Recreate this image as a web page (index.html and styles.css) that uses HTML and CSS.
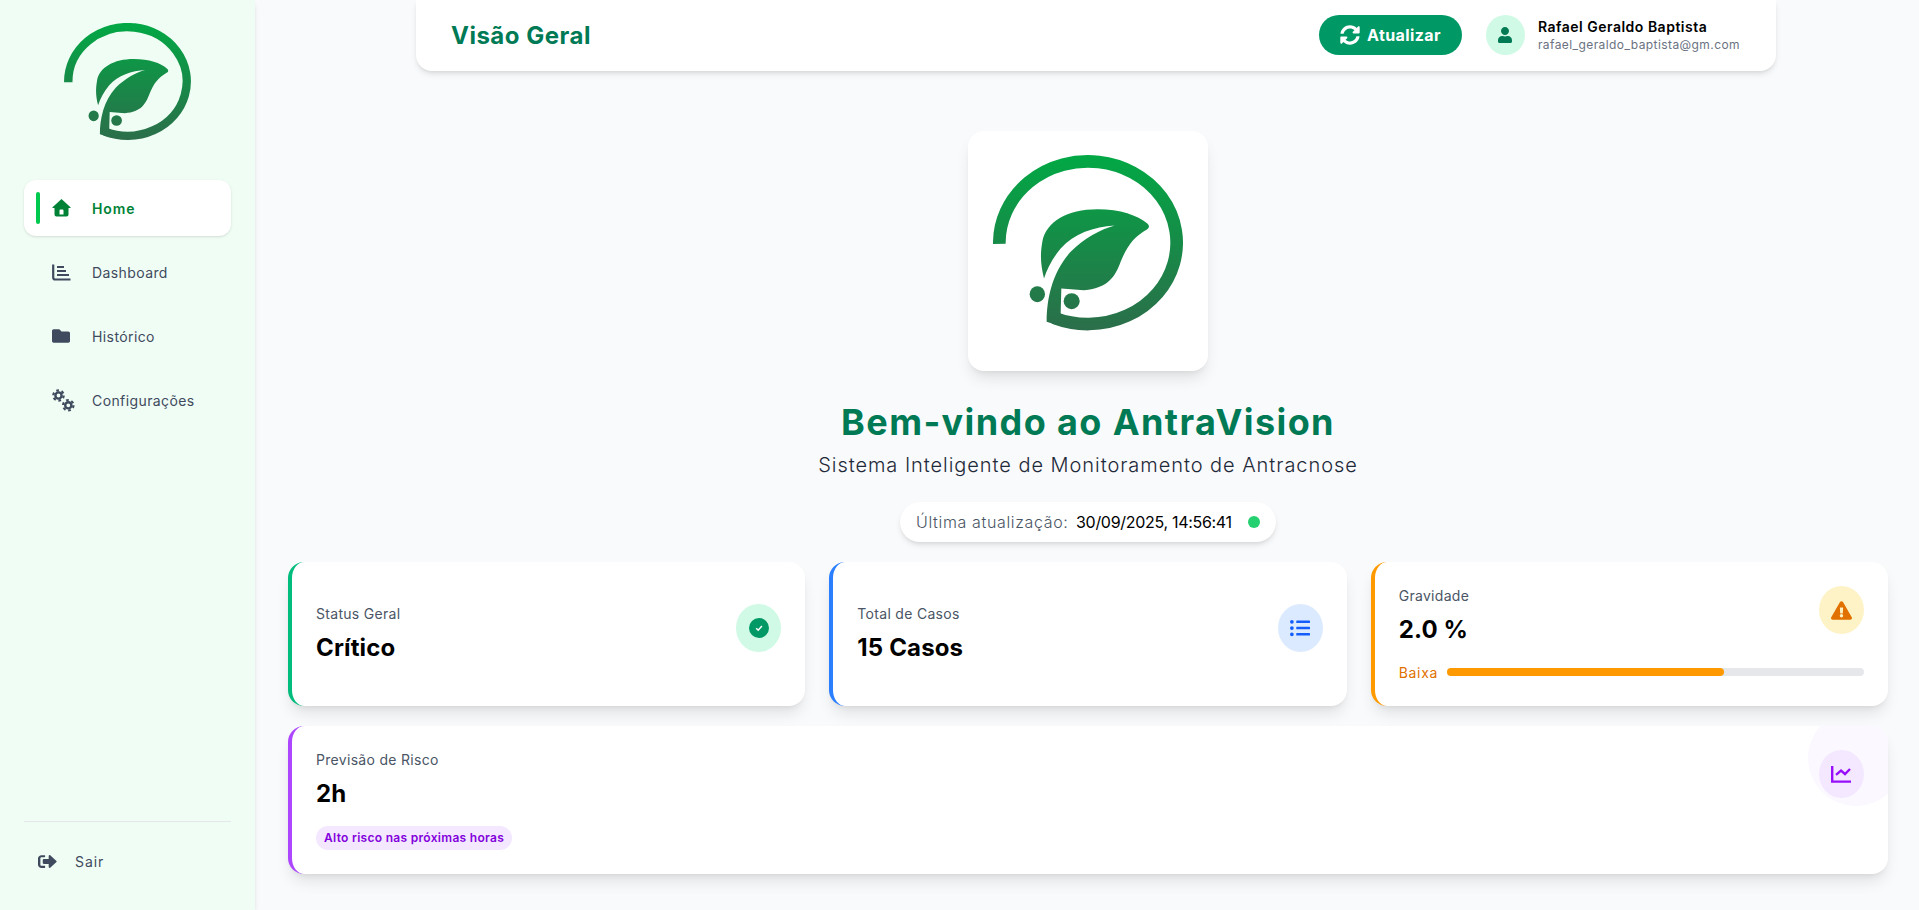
FILE: index.html
```html
<!DOCTYPE html>
<html lang="pt-BR">
<head>
  <meta charset="UTF-8" />
  <title>AntraVision - Visão Geral</title>
  <link rel="stylesheet" href="styles.css">
</head>
<body>
  <aside class="sidebar">
    <svg class="logo-side" viewBox="97 90 570 575" xmlns="http://www.w3.org/2000/svg" aria-label="AntraVision">
      <defs>
        <linearGradient id="logoGradA" gradientUnits="userSpaceOnUse" x1="0" y1="90" x2="0" y2="617">
          <stop offset="0%" stop-color="#02a845" />
          <stop offset="100%" stop-color="#2b6e4a" />
        </linearGradient>
      </defs>
      <path d="M116 356 A266 244 0 1 1 280 578" fill="none" stroke="url(#logoGradA)" stroke-width="38" />
      <path fill="url(#logoGradA)" d="M258 590 C258 520 275 440 330 380 C370 340 420 312 462 301 C400 305 340 325 300 370 C275 400 260 430 250 460 C240 420 238 390 245 350 C255 290 320 252 410 252 C480 252 530 270 560 295 Q570 305 560 312 C520 335 500 360 480 410 C465 450 445 490 370 495 L302 490 L300 566 L330 580 L290 600 Z" />
      <ellipse cx="230" cy="507" rx="23" ry="24" fill="url(#logoGradA)" />
      <ellipse cx="333" cy="528" rx="24" ry="24" fill="url(#logoGradA)" />
    </svg>

    <nav class="nav">
      <a class="nav-item active" href="#">
        <span class="nav-icon">
          <svg width="19" height="18" viewBox="0 0 19 18"><path fill="currentColor" fill-rule="evenodd" d="M9.5 0 L19 8.7 L17.2 9 H16.5 V15.5 a2 2 0 0 1-2 2 H4.5 a2 2 0 0 1-2-2 V9 H1.8 L0 8.7 Z M7.5 11.5 a1 1 0 0 1 1-1 h2 a1 1 0 0 1 1 1 V15.5 H7.5 Z"/></svg>
        </span>
        Home
      </a>
      <a class="nav-item" href="#">
        <span class="nav-icon">
          <svg width="19" height="17" viewBox="0 0 19 17"><path d="M1.2 0.5 V13.5 a2 2 0 0 0 2 2 H18.5" fill="none" stroke="currentColor" stroke-width="2.2"/><path fill="currentColor" d="M5 2 h7 v2 h-7z M5 6 h9 v2 h-9z M5 10 h12 v2 h-12z"/></svg>
        </span>
        Dashboard
      </a>
      <a class="nav-item" href="#">
        <span class="nav-icon">
          <svg width="18" height="18" viewBox="0 0 512 512"><path fill="currentColor" d="M464 128H272l-64-64H48C21.49 64 0 85.49 0 112v288c0 26.51 21.49 48 48 48h416c26.51 0 48-21.49 48-48V176c0-26.51-21.49-48-48-48z"/></svg>
        </span>
        Histórico
      </a>
      <a class="nav-item" href="#">
        <span class="nav-icon">
          <svg width="23" height="23" viewBox="0 0 23 23" fill="none" stroke="currentColor">
            <circle cx="6.5" cy="6.5" r="3.1" stroke-width="2.4"/>
            <circle cx="6.5" cy="6.5" r="5.2" stroke-width="2.2" stroke-dasharray="2.7"/>
            <circle cx="16.3" cy="16.3" r="3.1" stroke-width="2.4"/>
            <circle cx="16.3" cy="16.3" r="5.2" stroke-width="2.2" stroke-dasharray="2.7"/>
          </svg>
        </span>
        Configurações
      </a>
    </nav>

    <div class="sidebar-foot">
      <a class="logout" href="#">
        <svg width="19" height="17" viewBox="0 0 512 512" preserveAspectRatio="none"><path fill="currentColor" d="M497 273L329 441c-15 15-41 4.5-41-17v-96H152c-13.3 0-24-10.7-24-24v-96c0-13.3 10.7-24 24-24h136V88c0-21.4 25.9-32 41-17l168 168c9.3 9.4 9.3 24.6 0 34zM192 436v-40c0-6.6-5.4-12-12-12H96c-17.7 0-32-14.3-32-32V160c0-17.7 14.3-32 32-32h84c6.6 0 12-5.4 12-12V76c0-6.6-5.4-12-12-12H96c-53 0-96 43-96 96v192c0 53 43 96 96 96h84c6.6 0 12-5.4 12-12z"/></svg>
        Sair
      </a>
    </div>
  </aside>

  <main class="main">
    <header class="topbar">
      <h2 class="topbar-title">Visão Geral</h2>
      <div class="topbar-right">
        <button class="refresh-btn">
          <svg width="20" height="20" viewBox="0 0 512 512"><path fill="currentColor" d="M370.72 133.28C339.458 104.008 298.888 87.962 255.848 88c-77.458.068-144.328 53.178-162.791 126.85-1.344 5.363-6.122 9.15-11.651 9.15H24.103c-7.498 0-13.194-6.807-11.807-14.176C33.933 94.924 134.813 8 256 8c66.448 0 126.791 26.136 171.315 68.685L463.03 40.97C478.149 25.851 504 36.559 504 57.941V192c0 13.255-10.745 24-24 24H345.941c-21.382 0-32.09-25.851-16.971-40.971l41.75-41.749zM32 296h134.059c21.382 0 32.09 25.851 16.971 40.971l-41.75 41.75c31.262 29.273 71.835 45.319 114.876 45.28 77.418-.07 144.315-53.144 162.787-126.849 1.344-5.363 6.122-9.15 11.651-9.15h57.304c7.498 0 13.194 6.807 11.807 14.176C478.067 417.076 377.187 504 256 504c-66.448 0-126.791-26.136-171.315-68.685L48.97 471.03C33.851 486.149 8 475.441 8 454.059V320c0-13.255 10.745-24 24-24z"/></svg>
          Atualizar
        </button>
        <div class="user">
          <span class="avatar">
            <svg width="14" height="16" viewBox="0 0 448 512"><path fill="currentColor" d="M224 256c70.7 0 128-57.3 128-128S294.7 0 224 0 96 57.3 96 128s57.3 128 128 128zm89.6 32h-16.7c-22.2 10.2-46.9 16-72.9 16s-50.6-5.8-72.9-16h-16.7C60.2 288 0 348.2 0 422.4V464c0 26.5 21.5 48 48 48h352c26.5 0 48-21.5 48-48v-41.6c0-74.2-60.2-134.4-134.4-134.4z"/></svg>
          </span>
          <div class="user-info">
            <div class="user-name">Rafael Geraldo Baptista</div>
            <div class="user-mail">rafael_geraldo_baptista@gm.com</div>
          </div>
        </div>
      </div>
    </header>

    <section class="hero">
      <div class="hero-logo">
        <svg class="logo-main" viewBox="97 90 570 575" xmlns="http://www.w3.org/2000/svg" aria-label="AntraVision">
          <defs>
            <linearGradient id="logoGradB" gradientUnits="userSpaceOnUse" x1="0" y1="90" x2="0" y2="617">
              <stop offset="0%" stop-color="#02a845" />
              <stop offset="100%" stop-color="#2b6e4a" />
            </linearGradient>
          </defs>
          <path d="M116 356 A266 244 0 1 1 280 578" fill="none" stroke="url(#logoGradB)" stroke-width="38" />
          <path fill="url(#logoGradB)" d="M258 590 C258 520 275 440 330 380 C370 340 420 312 462 301 C400 305 340 325 300 370 C275 400 260 430 250 460 C240 420 238 390 245 350 C255 290 320 252 410 252 C480 252 530 270 560 295 Q570 305 560 312 C520 335 500 360 480 410 C465 450 445 490 370 495 L302 490 L300 566 L330 580 L290 600 Z" />
          <ellipse cx="230" cy="507" rx="23" ry="24" fill="url(#logoGradB)" />
          <ellipse cx="333" cy="528" rx="24" ry="24" fill="url(#logoGradB)" />
        </svg>
      </div>
      <h1 class="hero-title">Bem-vindo ao AntraVision</h1>
      <p class="hero-sub">Sistema Inteligente de Monitoramento de Antracnose</p>
      <div class="updated">
        <span class="updated-label">Última atualização:</span>
        <span class="updated-date">30/09/2025, 14:56:41</span>
        <span class="updated-dot"></span>
      </div>
    </section>

    <section class="cards">
      <div class="card card-green">
        <div class="card-row">
          <div>
            <div class="card-label">Status Geral</div>
            <div class="card-value">Crítico</div>
          </div>
          <span class="bubble bubble-green">
            <svg width="20" height="20" viewBox="0 0 20 20"><circle cx="10" cy="10" r="10" fill="currentColor"/><path d="M7.2 10.2 L9.2 12.2 L12.9 8" fill="none" stroke="#fff" stroke-width="1.5"/></svg>
          </span>
        </div>
      </div>

      <div class="card card-blue">
        <div class="card-row">
          <div>
            <div class="card-label">Total de Casos</div>
            <div class="card-value">15 Casos</div>
          </div>
          <span class="bubble bubble-blue">
            <svg width="20" height="20" viewBox="0 0 512 512"><path fill="currentColor" d="M48 48a48 48 0 1 0 48 48 48 48 0 0 0-48-48zm0 160a48 48 0 1 0 48 48 48 48 0 0 0-48-48zm0 160a48 48 0 1 0 48 48 48 48 0 0 0-48-48zm448 16H176a16 16 0 0 0-16 16v32a16 16 0 0 0 16 16h320a16 16 0 0 0 16-16v-32a16 16 0 0 0-16-16zm0-320H176a16 16 0 0 0-16 16v32a16 16 0 0 0 16 16h320a16 16 0 0 0 16-16V80a16 16 0 0 0-16-16zm0 160H176a16 16 0 0 0-16 16v32a16 16 0 0 0 16 16h320a16 16 0 0 0 16-16v-32a16 16 0 0 0-16-16z"/></svg>
          </span>
        </div>
      </div>

      <div class="card card-amber">
        <div class="card-row">
          <div>
            <div class="card-label">Gravidade</div>
            <div class="card-value">2.0 %</div>
          </div>
          <span class="bubble bubble-amber">
            <svg width="21" height="19" viewBox="0 0 576 512"><path fill="currentColor" d="M569.517 440.013C587.975 472.007 564.806 512 527.94 512H48.054c-36.937 0-59.999-40.055-41.577-71.987L246.423 23.985c18.467-32.009 64.72-31.951 83.154 0l239.94 416.028zM288 354c-25.405 0-46 20.595-46 46s20.595 46 46 46 46-20.595 46-46-20.595-46-46-46zm-43.673-165.346l7.418 136c.347 6.364 5.609 11.346 11.982 11.346h48.546c6.373 0 11.635-4.982 11.982-11.346l7.418-136c.375-6.874-5.098-12.654-11.982-12.654h-63.383c-6.884 0-12.356 5.78-11.981 12.654z"/></svg>
          </span>
        </div>
        <div class="severity">
          <span class="severity-label">Baixa</span>
          <div class="severity-track"><div class="severity-fill" style="width: 66.5%"></div></div>
        </div>
      </div>

      <div class="card card-purple card-wide">
        <span class="card-deco"></span>
        <div class="card-row">
          <div>
            <div class="card-label">Previsão de Risco</div>
            <div class="card-value">2h</div>
          </div>
          <span class="bubble bubble-purple">
            <svg width="20" height="17" viewBox="0 0 20 17" fill="none" stroke="currentColor" stroke-width="2.4"><path d="M1.2 0 V15.6 H20"/><path d="M5 8.8 L10 4.6 L14 8 L19 3"/></svg>
          </span>
        </div>
        <span class="risk-tag">Alto risco nas próximas horas</span>
      </div>
    </section>
  </main>
</body>
</html>
```

FILE: styles.css
```css
* {
  box-sizing: border-box;
}
html, body {
  height: 100%;
}
body {
  margin: 0;
  display: flex;
  height: 100vh;
  overflow: hidden;
  background: #f9fafb;
  color: #000;
  font-family: 'Inter', 'Liberation Sans', sans-serif;
}
a {
  color: inherit;
  text-decoration: none;
}

/* Sidebar */
.sidebar {
  width: 255px;
  flex-shrink: 0;
  display: flex;
  flex-direction: column;
  padding: 23px 24px 0 24px;
  background: #f0fdf4;
  box-shadow: 0 4px 6px -1px rgba(0,0,0,0.1), 0 2px 4px -2px rgba(0,0,0,0.1);
}
.logo-side {
  display: block;
  width: 127px;
  height: 128px;
  margin: 0 auto;
}
.nav {
  display: flex;
  flex-direction: column;
  gap: 8px;
  margin-top: 29px;
}
.nav-item {
  position: relative;
  display: flex;
  align-items: center;
  height: 56px;
  padding-left: 28px;
  border-radius: 12px;
  color: #3f4a5e;
  font-size: 14px;
  letter-spacing: 0.4px;
}
.nav-item.active {
  background: #fff;
  color: #008236;
  font-weight: 600;
  letter-spacing: 0.9px;
  box-shadow: 0 1px 3px rgba(0,0,0,0.1), 0 1px 2px -1px rgba(0,0,0,0.1);
}
.nav-item.active::before {
  content: "";
  position: absolute;
  left: 12px;
  top: 12px;
  bottom: 12px;
  width: 4px;
  border-radius: 2px;
  background: #00c950;
}
.nav-icon {
  display: flex;
  align-items: center;
  width: 24px;
  margin-right: 16px;
}
.sidebar-foot {
  margin-top: auto;
  height: 89px;
  padding: 31px 0 0 14px;
  border-top: 1px solid #e5e7eb;
}
.logout {
  display: flex;
  align-items: center;
  gap: 18px;
  color: #3f4a5e;
  font-size: 14px;
  letter-spacing: 0.9px;
}

/* Main */
.main {
  flex: 1;
  min-width: 0;
  padding: 0 31px 0 33px;
}
.topbar {
  display: flex;
  align-items: center;
  justify-content: space-between;
  height: 71px;
  margin: 0 112px 0 128px;
  padding: 0 36px 1px 35px;
  background: #fff;
  border-radius: 0 0 16px 16px;
  box-shadow: 0 4px 6px -1px rgba(0,0,0,0.1), 0 2px 4px -2px rgba(0,0,0,0.1);
}
.topbar-title {
  margin: 0;
  color: #007a55;
  font-size: 24px;
  font-weight: 700;
  letter-spacing: 0.5px;
}
.topbar-right {
  display: flex;
  align-items: center;
  gap: 24px;
}
.refresh-btn {
  display: flex;
  align-items: center;
  gap: 7px;
  width: 143px;
  height: 40px;
  padding: 0 0 0 21px;
  border: none;
  border-radius: 20px;
  background: #009966;
  color: #fff;
  font-family: inherit;
  font-size: 16px;
  font-weight: 700;
  letter-spacing: 0.4px;
}
.user {
  display: flex;
  align-items: center;
  gap: 13px;
  width: 254px;
}
.avatar {
  display: flex;
  align-items: center;
  justify-content: center;
  width: 40px;
  height: 40px;
  border-radius: 50%;
  background: #d0fae5;
  color: #007a55;
}
.user-name {
  font-size: 14px;
  font-weight: 600;
  line-height: 20px;
  letter-spacing: 0.5px;
}
.user-mail {
  color: #6a7282;
  font-size: 12px;
  line-height: 16px;
  letter-spacing: 0.42px;
}

/* Hero */
.hero {
  display: flex;
  flex-direction: column;
  align-items: center;
}
.hero-logo {
  display: flex;
  align-items: center;
  justify-content: center;
  width: 240px;
  height: 240px;
  margin-top: 60px;
  background: #fff;
  border-radius: 16px;
  box-shadow: 0 10px 15px -3px rgba(0,0,0,0.1), 0 4px 6px -4px rgba(0,0,0,0.1);
}
.logo-main {
  display: block;
  width: 190px;
  height: 192px;
}
.hero-title {
  margin: 31px 0 0 0;
  color: #007a55;
  font-size: 36px;
  font-weight: 700;
  line-height: 40px;
  letter-spacing: 1.4px;
}
.hero-sub {
  margin: 9px 0 0 0;
  color: #1e2939;
  font-size: 20px;
  font-weight: 300;
  line-height: 28px;
  letter-spacing: 0.95px;
}
.updated {
  display: flex;
  align-items: center;
  width: 376px;
  height: 40px;
  margin-top: 23px;
  padding: 0 16px;
  background: #fff;
  border-radius: 20px;
  box-shadow: 0 4px 6px -1px rgba(0,0,0,0.1), 0 2px 4px -2px rgba(0,0,0,0.1);
  font-size: 16px;
  font-weight: 300;
}
.updated-label {
  color: #4a5565;
  width: 160px;
  letter-spacing: 0.65px;
}
.updated-date {
  color: #000;
  width: 172px;
  font-weight: 400;
  letter-spacing: -0.3px;
}
.updated-dot {
  width: 12px;
  height: 12px;
  border-radius: 50%;
  background: #25d070;
}

/* Cards */
.cards {
  display: grid;
  grid-template-columns: repeat(3, 1fr);
  column-gap: 24px;
  row-gap: 20px;
  margin-top: 20px;
}
.card {
  position: relative;
  display: flex;
  flex-direction: column;
  justify-content: center;
  padding: 24px;
  overflow: hidden;
  background: #fff;
  border-left: 4px solid #000;
  border-radius: 16px;
  box-shadow: 0 10px 15px -3px rgba(0,0,0,0.1), 0 4px 6px -4px rgba(0,0,0,0.1);
}
.card-wide {
  grid-column: span 3;
}
.card-green { border-left-color: #00bc7d; }
.card-blue { border-left-color: #2b7fff; }
.card-amber { border-left-color: #fe9a00; }
.card-purple { border-left-color: #ad46ff; }

.card-row {
  position: relative;
  display: flex;
  justify-content: space-between;
  align-items: flex-start;
}
.card-label {
  color: #4a5565;
  font-size: 14px;
  line-height: 20px;
  letter-spacing: 0.3px;
}
.card-value {
  margin-top: 8px;
  font-size: 24px;
  font-weight: 700;
  line-height: 32px;
  letter-spacing: 0.15px;
}
.bubble {
  display: flex;
  align-items: center;
  justify-content: center;
  width: 45px;
  height: 48px;
  flex-shrink: 0;
  border-radius: 50%;
}
.bubble-green { background: #d0fae5; color: #009966; }
.bubble-blue { background: #dbeafe; color: #155dfc; }
.bubble-amber { background: #fef3c6; color: #e17100; }
.bubble-purple { background: #f3e8ff; color: #9810fa; }

.card-deco {
  position: absolute;
  top: -16px;
  right: -16px;
  width: 96px;
  height: 96px;
  border-radius: 50%;
  background: #fbf8ff;
}
.severity {
  display: flex;
  align-items: center;
  gap: 9px;
  height: 20px;
  margin-top: 16px;
}
.severity-label {
  color: #e17100;
  font-size: 14px;
  letter-spacing: 0.7px;
}
.severity-track {
  flex: 1;
  height: 8px;
  border-radius: 4px;
  background: #e5e7eb;
}
.severity-fill {
  height: 100%;
  border-radius: 4px;
  background: #fe9a00;
}
.risk-tag {
  align-self: flex-start;
  margin-top: 16px;
  padding: 0 8px;
  height: 24px;
  border-radius: 12px;
  background: #f3e8ff;
  color: #8200db;
  font-size: 12px;
  font-weight: 600;
  line-height: 24px;
  letter-spacing: 0.3px;
}
```
